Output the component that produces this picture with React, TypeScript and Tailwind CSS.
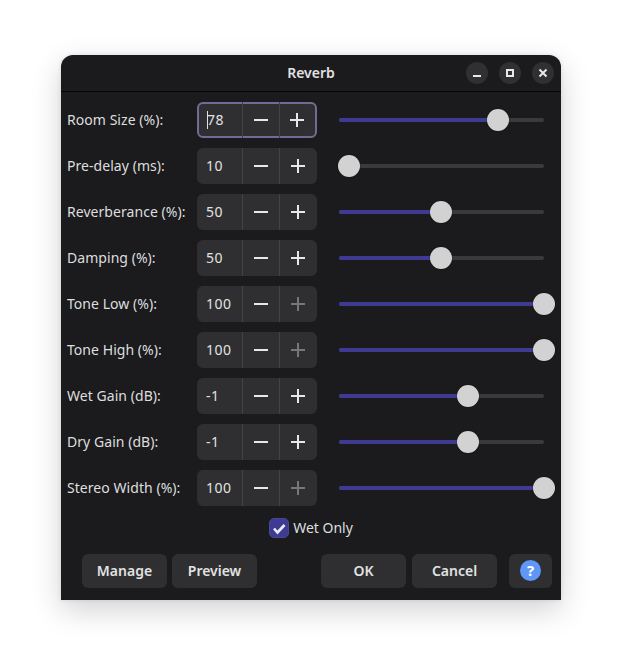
import React from "react";

const rows: { label: string; value: string; pos: number; plusDisabled?: boolean; focus?: boolean }[] = [
  { label: "Room Size (%):", value: "78", pos: 159, focus: true },
  { label: "Pre-delay (ms):", value: "10", pos: 10 },
  { label: "Reverberance (%):", value: "50", pos: 102 },
  { label: "Damping (%):", value: "50", pos: 102 },
  { label: "Tone Low (%):", value: "100", pos: 205, plusDisabled: true },
  { label: "Tone High (%):", value: "100", pos: 205, plusDisabled: true },
  { label: "Wet Gain (dB):", value: "-1", pos: 129 },
  { label: "Dry Gain (dB):", value: "-1", pos: 129 },
  { label: "Stereo Width (%):", value: "100", pos: 205, plusDisabled: true },
];

function Minus() {
  return (
    <svg width="14" height="14" viewBox="0 0 14 14" className="block">
      <rect x="0" y="6" width="14" height="2" fill="currentColor" />
    </svg>
  );
}
function Plus() {
  return (
    <svg width="14" height="14" viewBox="0 0 14 14" className="block">
      <rect x="0" y="6" width="14" height="2" fill="currentColor" />
      <rect x="6" y="0" width="2" height="14" fill="currentColor" />
    </svg>
  );
}

function Row({ label, value, pos, plusDisabled, focus }: (typeof rows)[number]) {
  return (
    <div className="flex h-9 items-center">
      <span className="w-[136px] pb-0.5 pl-1.5 text-[14px] tracking-[0.05px] text-[#dededf]">{label}</span>
      <div
        className={
          "box-border flex h-9 w-[120px] items-stretch rounded-[6px] bg-[#2f2f31] " +
          (focus ? "border-2 border-[#6f6d96]" : "")
        }
      >
        <div className={"flex w-[45px] items-center pb-0.5 text-[14px] tracking-[0.5px] text-[#e2e2e3] " + (focus ? "-ml-0.5 pl-[10px]" : "pl-[9px]")}>
          {focus && <span className="mr-[-1px] mt-0.5 h-[18px] w-px bg-[#e2e2e3]" />}
          {value}
        </div>
        <div className={"flex w-[37px] items-center justify-center border-l border-[#434345] text-[#e8e8e8] " + (focus ? "-my-0.5" : "")}>
          <Minus />
        </div>
        <div
          className={
            "flex flex-1 items-center justify-center border-l border-[#434345] pr-px " +
            (plusDisabled ? "text-[#77777a]" : "text-[#e8e8e8]") +
            (focus ? " -my-0.5" : "")
          }
        >
          <Plus />
        </div>
      </div>
      <div className="relative ml-[22px] flex h-1 w-[205px] rounded-full bg-[#3a3a3c]">
        <div className="h-1 rounded-full bg-[#3f3b92]" style={{ width: pos }} />
        <div
          className="absolute top-[-9px] h-[22px] w-[22px] -translate-x-1/2 rounded-full bg-[#d2d2d2] shadow-[0_0_2px_rgba(0,0,0,0.4)]"
          style={{ left: pos }}
        />
      </div>
    </div>
  );
}

function Btn({ children, w }: { children: React.ReactNode; w: string }) {
  return (
    <div className={"flex h-[34px] items-center justify-center rounded-[6px] bg-[#2f2f31] pb-0.5 text-[14px] font-semibold text-[#e2e2e3] " + w}>
      {children}
    </div>
  );
}

function WinBtn({ children }: { children: React.ReactNode }) {
  return (
    <div className="flex h-[22px] w-[22px] items-center justify-center rounded-full bg-[#303032] text-[#e8e8e8]">
      {children}
    </div>
  );
}

export default function App() {
  return (
    <div className="h-[667px] w-[622px] overflow-hidden bg-white pl-[61px] pt-[55px] font-['Noto_Sans',sans-serif]">
      <div className="flex h-[545px] w-[500px] flex-col rounded-t-[12px] bg-[#1b1b1d] shadow-[0_10px_30px_rgba(0,0,0,0.18),0_0_4px_rgba(0,0,0,0.1)]">
        <div className="relative flex h-[37px] shrink-0 items-center justify-center border-b border-[#060607]">
          <span className="pb-0.5 text-[14px] font-semibold text-[#e2e2e3]">Reverb</span>
          <div className="absolute right-[7px] top-[7px] flex gap-[11px]">
            <WinBtn>
              <svg width="10" height="10" viewBox="0 0 10 10"><rect x="1" y="7" width="8" height="2" fill="currentColor" /></svg>
            </WinBtn>
            <WinBtn>
              <svg width="10" height="10" viewBox="0 0 10 10"><rect x="2" y="2" width="6" height="6" fill="none" stroke="currentColor" strokeWidth="2" /></svg>
            </WinBtn>
            <WinBtn>
              <svg width="10" height="10" viewBox="0 0 10 10"><path d="M1.5 1.5 L8.5 8.5 M8.5 1.5 L1.5 8.5" stroke="currentColor" strokeWidth="2" fill="none" /></svg>
            </WinBtn>
          </div>
        </div>
        <div className="flex flex-col gap-2.5 pt-2.5">
          {rows.map((r) => (
            <Row key={r.label} {...r} />
          ))}
        </div>
        <div className="mt-2.5 flex h-[24px] items-center justify-center gap-1">
          <div className="flex h-5 w-5 items-center justify-center rounded-[5px] border border-[#4a4699] bg-[#3f3b92] text-[#ecebfa]">
            <svg width="20" height="20" viewBox="0 0 20 20" className="block shrink-0"><path d="M5 10.5 L8.5 14.5 L15.5 7" stroke="currentColor" strokeWidth="2.6" fill="none" /></svg>
          </div>
          <span className="pb-0.5 text-[14px] text-[#dededf]">Wet Only</span>
        </div>
        <div className="mt-[14px] flex gap-[5px] pl-[21px]">
          <Btn w="w-[85px]">Manage</Btn>
          <Btn w="w-[85px]">Preview</Btn>
          <Btn w="ml-[59px] w-[85px]">OK</Btn>
          <Btn w="ml-px w-[85px]">Cancel</Btn>
          <Btn w="ml-[7px] w-[43px]">
            <span className="flex h-[21px] w-[21px] items-center justify-center rounded-full bg-[#5e97f6] text-[15px] font-bold text-white">?</span>
          </Btn>
        </div>
      </div>
    </div>
  );
}
